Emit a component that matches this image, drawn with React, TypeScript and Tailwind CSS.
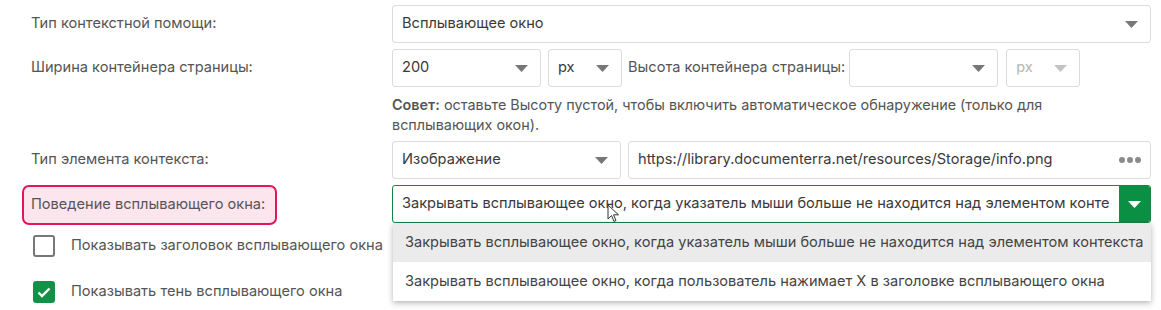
import React from "react";

const Caret = ({ className = "" }: { className?: string }) => (
  <svg width="13" height="7" viewBox="0 0 13 7" className={className}>
    <path d="M0 0 H13 L6.5 7 Z" fill="currentColor" />
  </svg>
);

const Select = ({
  value,
  w,
  disabled = false,
}: {
  value: string;
  w: string;
  disabled?: boolean;
}) => (
  <div
    className={`${w} h-[38px] shrink-0 flex items-center justify-between pl-[9px] pr-[12px] border border-[#dcdcdc] rounded-[3px] bg-white ${
      disabled ? "text-[#b5b5b5]" : "text-[#3a3a3a]"
    }`}
  >
    <span>{value}</span>
    <Caret className={disabled ? "text-[#c4c4c4]" : "text-[#777]"} />
  </div>
);

export default function App() {
  return (
    <div
      className="w-[1161px] h-[310px] bg-white overflow-hidden relative text-[14.6px] text-[#555]"
      style={{ fontFamily: "Inter, 'Noto Sans', sans-serif" }}
    >
      <div className="pl-[22px] pr-[10px] pt-[5px] grid grid-cols-[370px_minmax(0,1fr)] gap-y-[6px]">
        {/* Row 1 */}
        <div className="pl-[9px] flex items-center">Тип контекстной помощи:</div>
        <Select value="Всплывающее окно" w="w-full" />

        {/* Row 2 */}
        <div className="pl-[9px] flex items-center">Ширина контейнера страницы:</div>
        <div className="flex items-center min-w-0">
          <Select value="200" w="w-[149px]" />
          <div className="w-[7px]" />
          <Select value="px" w="w-[74px]" />
          <span className="ml-[6px] mr-[4px] whitespace-nowrap">Высота контейнера страницы:</span>
          <Select value="" w="w-[149px]" />
          <div className="w-[8px]" />
          <Select value="px" w="w-[74px]" disabled />
        </div>

        {/* Tip */}
        <div />
        <div className="text-[14.4px] leading-[20px] text-[#555] pt-[2px] pr-[60px]">
          <span className="font-semibold">Совет:</span> оставьте Высоту пустой, чтобы включить автоматическое обнаружение (только для всплывающих окон).
        </div>

        {/* Row 3 */}
        <div className="pl-[9px] flex items-center">Тип элемента контекста:</div>
        <div className="flex items-center gap-[7px] min-w-0">
          <Select value="Изображение" w="w-[229px]" />
          <div className="flex-1 min-w-0 h-[38px] flex items-center justify-between pl-[9px] pr-[9px] border border-[#dcdcdc] rounded-[3px] text-[#3a3a3a]">
            <span className="whitespace-nowrap overflow-hidden">https://library.documenterra.net/resources/Storage/info.png</span>
            <span className="flex gap-[2px] shrink-0">
              <span className="w-[6px] h-[6px] rounded-full bg-[#8a8a8a]" />
              <span className="w-[6px] h-[6px] rounded-full bg-[#8a8a8a]" />
              <span className="w-[6px] h-[6px] rounded-full bg-[#8a8a8a]" />
            </span>
          </div>
        </div>

        {/* Row 4 */}
        <div className="flex items-center">
          <div className="h-[40px] w-[255px] flex items-center pl-[7px] border-2 border-[#e6145c] bg-[#fde5ee] rounded-[7px]">
            Поведение всплывающего окна:
          </div>
        </div>
        <div className="relative min-w-0">
          <div className="h-[38px] flex items-center border border-[#15853f] rounded-[3px] overflow-hidden">
            <span className="flex-1 min-w-0 pl-[9px] whitespace-nowrap overflow-hidden text-[#3a3a3a]">
              Закрывать всплывающее окно, когда указатель мыши больше не находится над элементом контекста
            </span>
            <div className="w-[31px] h-full shrink-0 bg-[#0b8f45] flex items-center justify-center ml-[9px]">
              <Caret className="text-white" />
            </div>
          </div>
          {/* Dropdown */}
          <div className="absolute left-[1px] right-0 top-[38px] bg-white shadow-[0_2px_6px_rgba(0,0,0,0.3)] z-10 text-[#444]">
            <div className="h-[39px] flex items-center pl-[12px] bg-[#ebebeb] whitespace-nowrap">
              Закрывать всплывающее окно, когда указатель мыши больше не находится над элементом контекста
            </div>
            <div className="h-[39px] flex items-center pl-[12px] whitespace-nowrap">
              Закрывать всплывающее окно, когда пользователь нажимает X в заголовке всплывающего окна
            </div>
          </div>
          {/* Cursor */}
          <svg
            className="absolute left-[215px] top-[19px] z-20"
            width="14"
            height="20"
            viewBox="0 0 14 20"
          >
            <path
              d="M1 1 L1 15 L4.5 11.5 L7 17.5 L9 16.5 L6.5 10.8 L11.5 10.8 Z"
              fill="white"
              stroke="#333"
              strokeWidth="1"
              strokeLinejoin="round"
            />
          </svg>
        </div>

        {/* Checkboxes */}
        <div className="col-span-2 flex flex-col gap-[24px] pl-[11px] pt-[4px]">
          <div className="flex items-center gap-[16px]">
            <div className="w-[22px] h-[22px] border-2 border-[#777] rounded-[3px] bg-white" />
            <span>Показывать заголовок всплывающего окна</span>
          </div>
          <div className="flex items-center gap-[16px]">
            <div className="w-[22px] h-[22px] rounded-[3px] bg-[#129147] flex items-center justify-center">
              <svg width="14" height="11" viewBox="0 0 14 11">
                <path d="M1.5 5.5 L5 9 L12.5 1.5" fill="none" stroke="white" strokeWidth="2.4" />
              </svg>
            </div>
            <span>Показывать тень всплывающего окна</span>
          </div>
        </div>
      </div>
    </div>
  );
}
